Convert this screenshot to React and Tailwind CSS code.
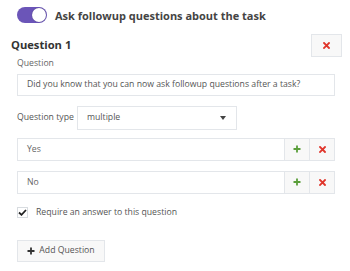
import React from "react";

function XIcon() {
  return (
    <svg width="7" height="7" viewBox="0 0 7 7">
      <path d="M1 1 L6 6 M6 1 L1 6" stroke="#e0352b" strokeWidth="1.8" strokeLinecap="square" />
    </svg>
  );
}
function PlusIcon({ color = "#5a9e3a" }) {
  return (
    <svg width="8" height="8" viewBox="0 0 8 8">
      <path d="M4 0.5 V7.5 M0.5 4 H7.5" stroke={color} strokeWidth="1.8" />
    </svg>
  );
}

function AnswerRow({ text }) {
  return (
    <div className="flex h-[23px] border border-[#e3e6ea] bg-white">
      <div className="flex-1 flex items-center pl-[9px] text-[8.7px] text-[#666]">{text}</div>
      <div className="w-[25px] border-l border-[#e3e6ea] bg-[#f8f8f8] flex items-center justify-center">
        <PlusIcon />
      </div>
      <div className="w-[25px] border-l border-[#e3e6ea] bg-[#f8f8f8] flex items-center justify-center">
        <XIcon />
      </div>
    </div>
  );
}

export default function App() {
  return (
    <div className="w-[350px] h-[271px] bg-white overflow-hidden" style={{ fontFamily: '"Open Sans", sans-serif' }}>
      <div className="flex items-center pt-[7px] pl-[17px] h-[23px]">
        <div className="relative w-[30px] h-[16px] rounded-full bg-[#6b55b8]">
          <div className="absolute right-[1px] top-[1px] w-[14px] h-[14px] rounded-full bg-white shadow-[0_0_1px_rgba(0,0,0,0.4)]" />
        </div>
        <span className="ml-[8px] text-[11px] font-bold text-[#444] leading-none">Ask followup questions about the task</span>
      </div>
      <div className="flex items-start justify-between pl-[11px] pr-[8px] mt-[11px]">
        <span className="text-[11.2px] font-bold text-[#333] leading-none mt-[5px]">Question 1</span>
        <div className="w-[31px] h-[23px] border border-[#e3e6ea] bg-[#f8f8f8] flex items-center justify-center">
          <XIcon />
        </div>
      </div>
      <div className="pl-[17px] pr-[15px]">
        <div className="text-[8.7px] text-[#666] leading-none mt-[2px]">Question</div>
        <div className="mt-[6px] h-[22px] border border-[#e3e6ea] flex items-center pl-[9px] text-[8.7px] text-[#555]">
          Did you know that you can now ask followup questions after a task?
        </div>
        <div className="flex items-center mt-[10px]">
          <span className="text-[8.7px] text-[#555] w-[60px]">Question type</span>
          <div className="w-[160px] h-[24px] border border-[#e3e6ea] flex items-center justify-between pl-[9px] pr-[10px] text-[8.7px] text-[#555]">
            <span>multiple</span>
            <svg width="6" height="4" viewBox="0 0 6 4"><path d="M0 0 H6 L3 4 Z" fill="#444" /></svg>
          </div>
        </div>
        <div className="mt-[8px]">
          <AnswerRow text="Yes" />
        </div>
        <div className="mt-[10px]">
          <AnswerRow text="No" />
        </div>
        <div className="flex items-center mt-[12px]">
          <div className="w-[11px] h-[11px] border border-[#d8dce0] bg-white flex items-center justify-center">
            <svg width="9" height="7" viewBox="0 0 9 7"><path d="M1 3.5 L3.5 5.8 L8 1" stroke="#222" strokeWidth="1.8" fill="none" /></svg>
          </div>
          <span className="ml-[8px] text-[8.7px] text-[#555]">Require an answer to this question</span>
        </div>
        <div className="mt-[21px] w-[88px] h-[22px] border border-[#e3e6ea] bg-[#f8f8f8] flex items-center justify-center gap-[4px] text-[8.7px] text-[#555]">
          <PlusIcon color="#333" />
          <span>Add Question</span>
        </div>
      </div>
    </div>
  );
}
